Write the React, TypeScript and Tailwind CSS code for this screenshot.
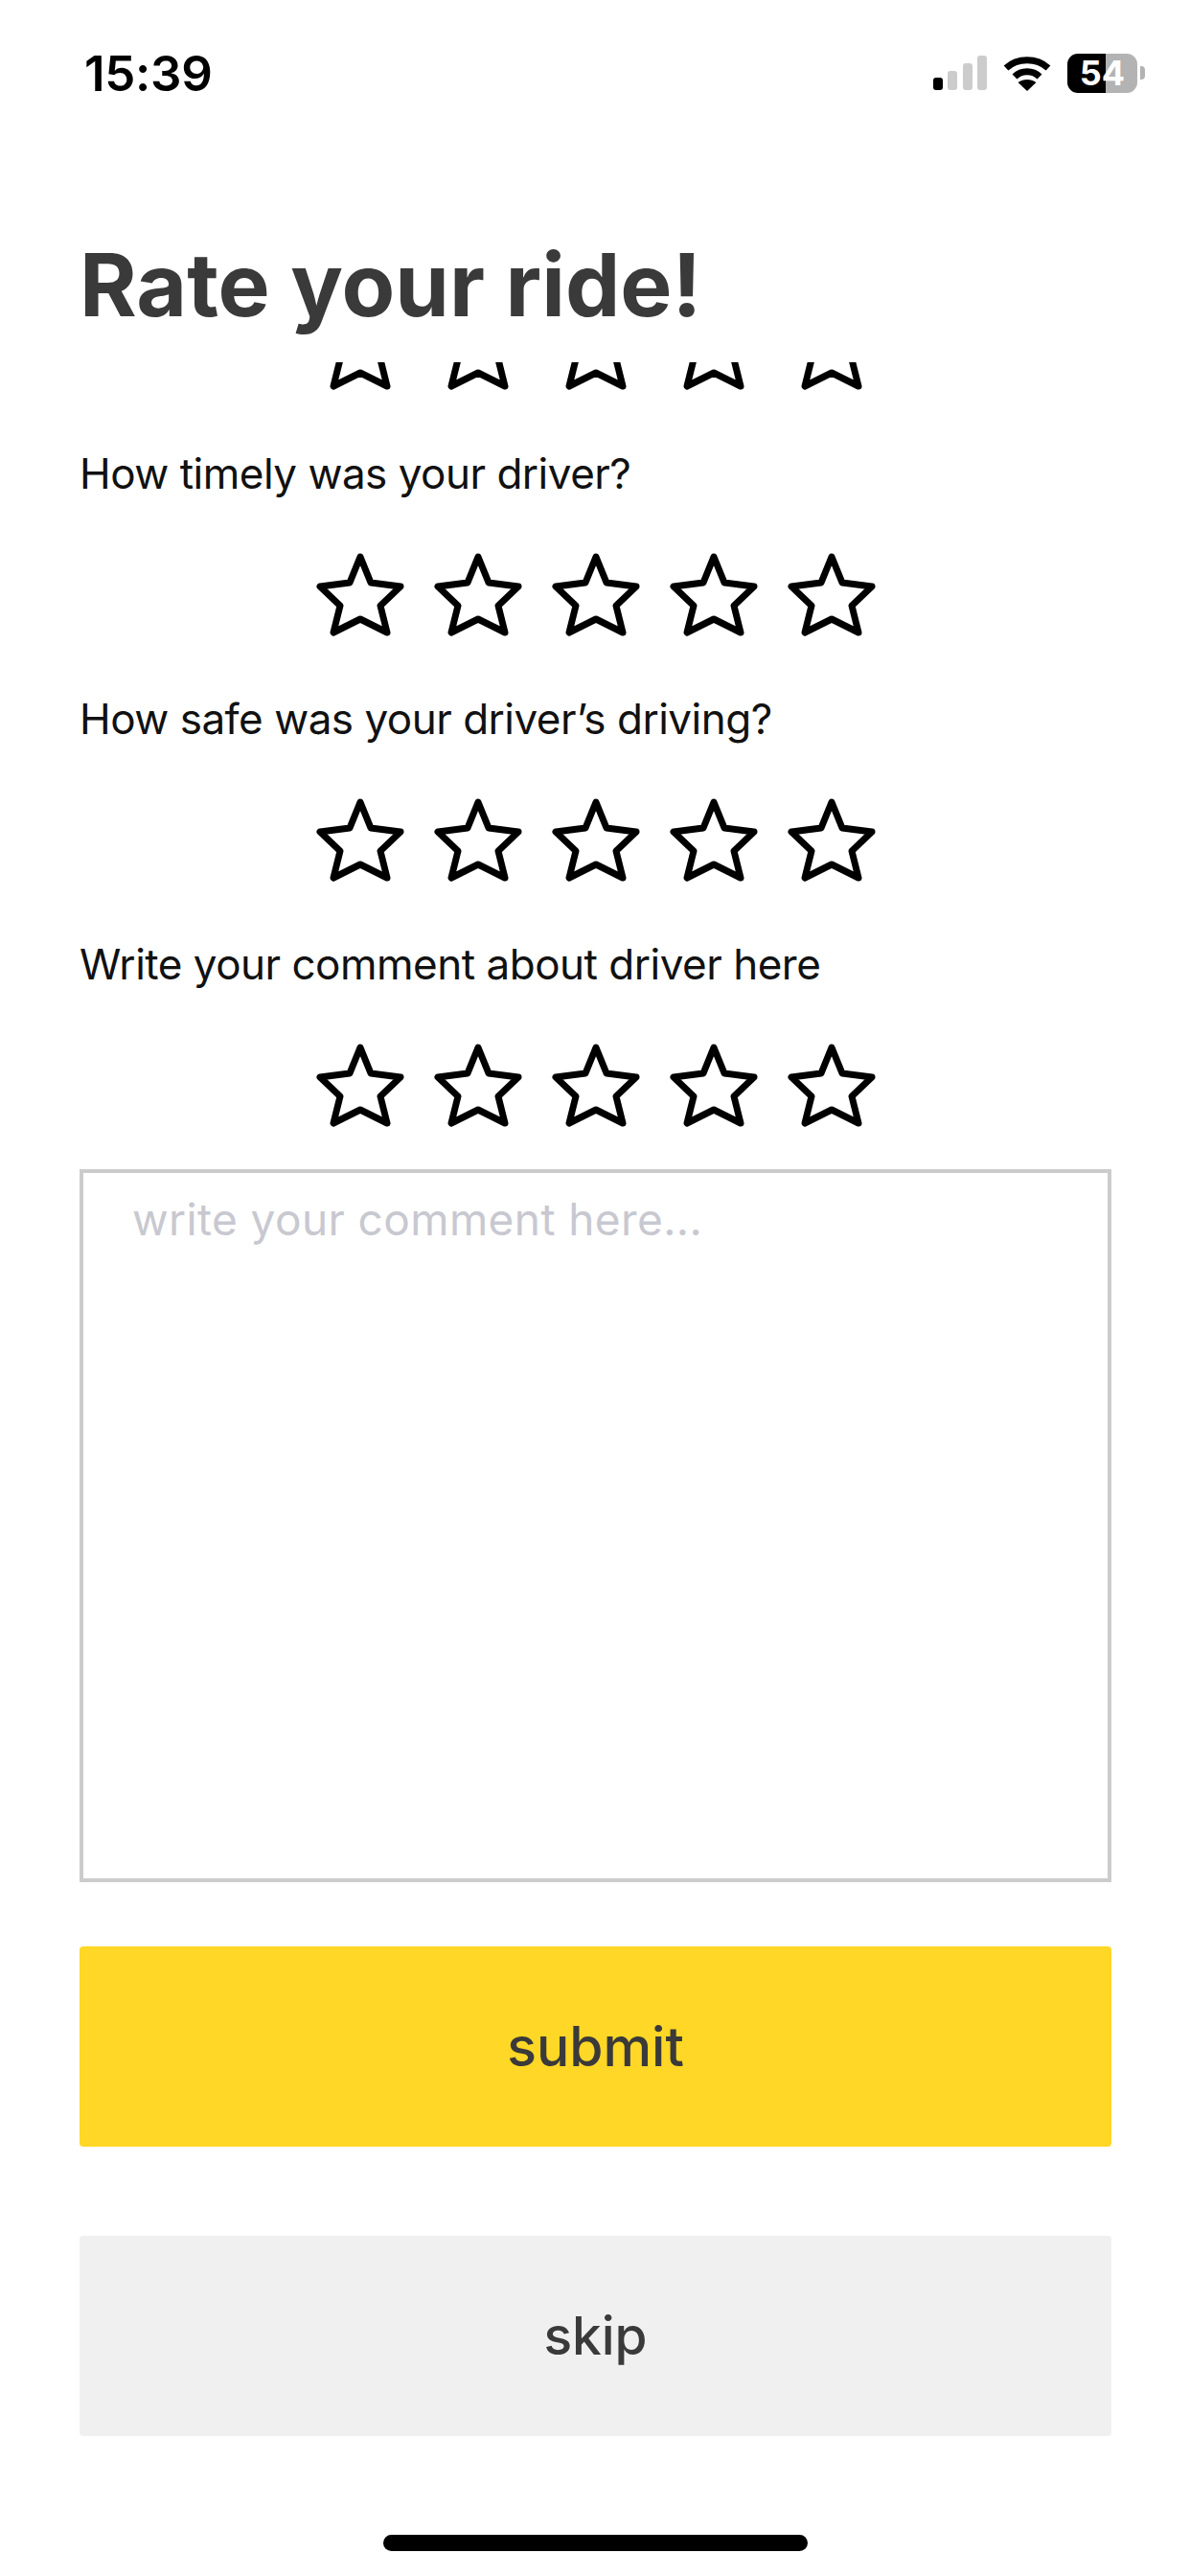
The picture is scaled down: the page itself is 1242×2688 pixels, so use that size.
const LABEL_CLASS = "flex h-[60px] items-center text-[44px] font-normal leading-none tracking-[-0.5px] text-[#111111]"

function Star() {
  return (
    <svg width="92" height="87" viewBox="0 0 92 87" fill="none" stroke="#000000" strokeWidth="7" strokeLinejoin="round">
      <path d="M46 4 L57 31 L88 35 L67 55 L74 83 L46 69 L18 83 L25 55 L4 35 L35 31 Z" />
    </svg>
  )
}

function Stars() {
  return (
    <div className="flex h-[87px] items-center justify-center gap-[31px]">
      <Star />
      <Star />
      <Star />
      <Star />
      <Star />
    </div>
  )
}

function Question({ label }: { label: string }) {
  return (
    <div className="flex flex-col">
      <div className={LABEL_CLASS}>{label}</div>
      <div className="mt-[53px]">
        <Stars />
      </div>
    </div>
  )
}

function StatusBar() {
  return (
    <div className="mt-[48px] flex h-[56px] items-center justify-between pl-[88px] pr-[47px]">
      <span className="text-[51px] font-semibold leading-none tracking-[-0.3px] text-black">15:39</span>
      <div className="flex items-center">
        <svg width="56" height="36" viewBox="0 0 56 36" fill="#cccccc">
          <rect x="0" y="23" width="10" height="13" rx="3" fill="#000000" />
          <rect x="15" y="16" width="10" height="20" rx="3" />
          <rect x="31" y="8" width="10" height="28" rx="3" />
          <rect x="46" y="0" width="10" height="36" rx="3" />
        </svg>
        <svg className="ml-[17px]" width="50" height="37" viewBox="0 0 50 37" fill="none" stroke="#000000" strokeWidth="7">
          <path d="M3 13 C15 2 35 2 47 13" />
          <path d="M12 22 C19 15 31 15 38 22" />
          <path d="M25 37 L15.5 28 C21 24 29 24 34.5 28 Z" fill="#000000" stroke="none" />
        </svg>
        <div className="ml-[17px] flex h-[41px] w-[73px] items-center justify-center rounded-[11px] bg-[linear-gradient(90deg,#000000_55%,#b3b3b3_55%)] text-[36px] font-bold leading-none text-white">
          54
        </div>
        <div className="ml-[3px] h-[14px] w-[5px] rounded-r-[4px] bg-[#b3b3b3]" />
      </div>
    </div>
  )
}

export default function App() {
  return (
    <div className="flex h-[2688px] w-[1242px] flex-col overflow-hidden bg-white font-['Inter',sans-serif]">
      <StatusBar />

      <div className="flex flex-1 flex-col pl-[83px] pr-[82px]">
        <h1 className="mt-[148px] h-[126px] text-[91px] font-bold leading-[90px] text-[#3a3a3a]">
          Rate your ride!
        </h1>

        {/* first row of stars is scrolled under the title */}
        <div className="flex h-[29px] items-end justify-center overflow-hidden">
          <Stars />
        </div>

        <div className="mt-[57px] flex flex-col gap-[56px]">
          <Question label="How timely was your driver?" />
          <Question label="How safe was your driver’s driving?" />
          <Question label="Write your comment about driver here" />
        </div>

        <div className="mt-[44px] h-[744px] border-[4px] border-[#cccccc] px-[51px] py-[21px] text-[46px] leading-[54px] tracking-[0.4px] text-[#c8c8d0]">
          write your comment here...
        </div>

        <button className="mt-[67px] flex h-[209px] items-center justify-center rounded-[4px] bg-[#ffd726] text-[57px] font-medium text-[#3a3a3a]">
          submit
        </button>
        <button className="mt-[93px] flex h-[209px] items-center justify-center rounded-[4px] bg-[#f0f0f0] text-[55px] font-medium text-[#3a3a3a]">
          skip
        </button>

        <div className="mt-[103px] h-[17px] w-[443px] self-center rounded-full bg-black" />
      </div>
    </div>
  )
}
